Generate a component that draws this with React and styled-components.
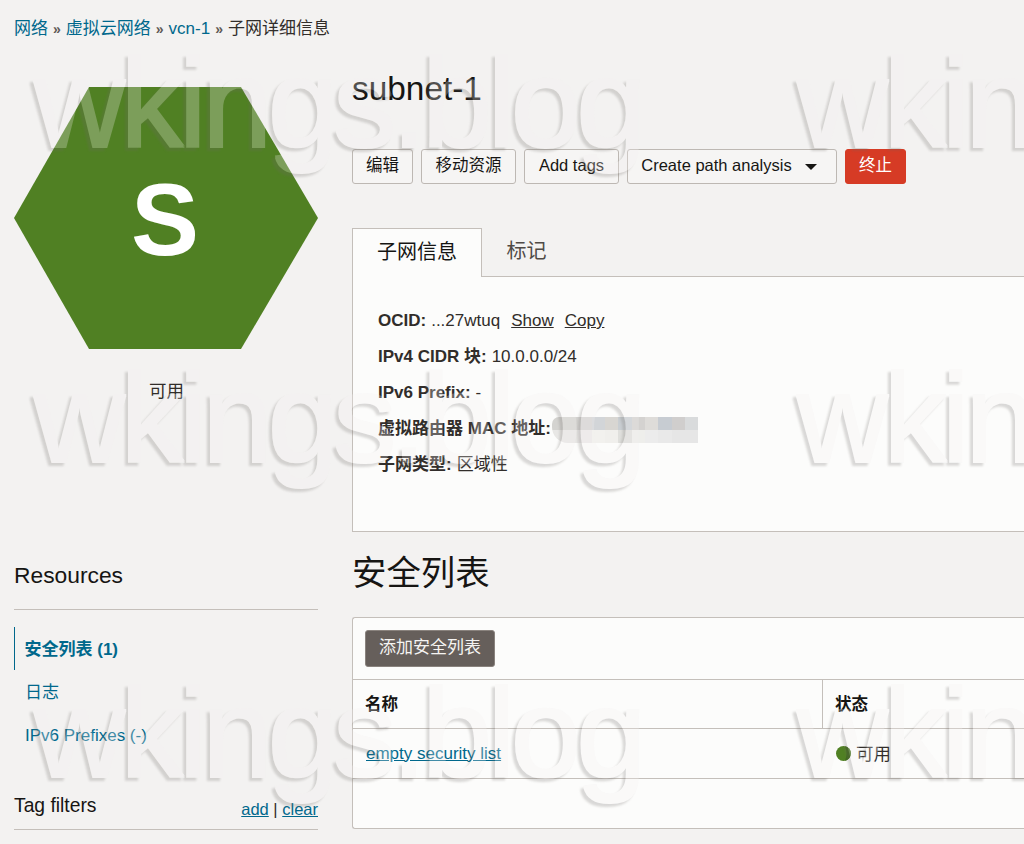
import React from "react";
import styled, { createGlobalStyle } from "styled-components";

const SANS = `"Liberation Sans", "Noto Sans CJK SC", sans-serif`;
const INK = "#161513";
const BODY = "#312d2a";
const LINK = "#00688c";
const LINE = "#c4bfba";

const Global = createGlobalStyle`
  html, body { margin: 0; padding: 0; background: #f3f2f1; }
  * { box-sizing: border-box; }
`;

const Viewport = styled.div`
  position: relative;
  width: 1024px;
  height: 844px;
  overflow: hidden;
  background: #f3f2f1;
  font-family: ${SANS};
  font-size: 17px;
  line-height: 20px;
  color: ${BODY};
`;

const Crumbs = styled.nav`
  display: flex;
  align-items: center;
  gap: 5px;
  height: 58px;
  padding-left: 14px;
`;
const CrumbLink = styled.a`
  color: ${LINK};
`;
const CrumbSep = styled.span`
  font-size: 14px;
  color: #5f5a56;
  font-weight: bold;
`;

const Columns = styled.div`
  display: grid;
  grid-template-columns: 304px 700px;
  column-gap: 34px;
  padding: 12px 0 0 14px;
`;

const Side = styled.aside`
  display: flex;
  flex-direction: column;
`;
const Hex = styled.svg`
  display: block;
  width: 304px;
  height: 262px;
  margin-top: 17px;
`;
const HexLetter = styled.text`
  font-family: ${SANS};
  font-weight: bold;
  font-size: 102px;
  fill: #fff;
  text-anchor: middle;
`;
const SideStatus = styled.div`
  margin-top: 30px;
  font-size: 17.5px;
  line-height: 24px;
  text-align: center;
  padding-left: 1px;
`;
const SideHead = styled.h3`
  margin: 157px 0 0;
  padding-bottom: 19px;
  border-bottom: 1px solid ${LINE};
  font-size: 22.8px;
  font-weight: normal;
  line-height: 30px;
  color: ${INK};
`;
const Menu = styled.ul`
  list-style: none;
  margin: 17px 0 0;
  padding: 0;
`;
const MenuItem = styled.li`
  display: flex;
  align-items: center;
  height: 43.3px;
  padding: 2px 0 0 ${(p) => (p.$active ? "9.5px" : "11px")};
  color: ${LINK};
  font-weight: ${(p) => (p.$active ? "bold" : "normal")};
  border-left: ${(p) => (p.$active ? "1.5px solid " + LINK : "none")};
`;
const TagHead = styled.div`
  display: flex;
  justify-content: space-between;
  align-items: flex-end;
  margin-top: 36px;
  padding-bottom: 10px;
  border-bottom: 1px solid ${LINE};
`;
const TagTitle = styled.span`
  font-size: 19.3px;
  line-height: 26px;
  color: ${INK};
`;
const TagLinks = styled.span`
  font-size: 16.5px;
  line-height: 20px;
  color: ${BODY};
`;
const Under = styled.a`
  color: ${(p) => p.$color || LINK};
  text-decoration: underline;
`;

const Main = styled.main`
  display: flex;
  flex-direction: column;
`;
const Title = styled.h1`
  margin: 0;
  font-size: 33.4px;
  font-weight: normal;
  line-height: 38px;
  color: ${INK};
`;
const Toolbar = styled.div`
  display: flex;
  gap: 8px;
  margin-top: 41px;
`;
const Button = styled.button`
  display: inline-flex;
  align-items: center;
  justify-content: center;
  gap: 13px;
  height: 35px;
  width: ${(p) => p.$w}px;
  padding: 0 ${(p) => p.$pr || 0}px 3px 0;
  font: inherit;
  font-size: 16.5px;
  color: ${INK};
  background: #f6f5f4;
  border: 1px solid #bdb8b3;
  border-radius: 3px;
`;
const DangerButton = styled(Button)`
  color: #fff;
  background: #d63b25;
  border-color: #d63b25;
`;
const Caret = styled.span`
  width: 0;
  height: 0;
  margin-top: 3px;
  border-left: 6px solid transparent;
  border-right: 6px solid transparent;
  border-top: 6px solid ${INK};
`;
const Tabs = styled.div`
  display: flex;
  height: 49px;
  margin-top: 44px;
  border-bottom: 1px solid ${LINE};
`;
const Tab = styled.div`
  display: flex;
  align-items: center;
  justify-content: center;
  width: ${(p) => (p.$active ? "130px" : "89px")};
  height: ${(p) => (p.$active ? "49px" : "48px")};
  padding-bottom: 2px;
  font-size: 20px;
  color: ${(p) => (p.$active ? INK : "#4f4a46")};
  background: ${(p) => (p.$active ? "#fcfcfb" : "transparent")};
  border: ${(p) => (p.$active ? "1px solid " + LINE : "none")};
  border-bottom: none;
`;
const InfoPanel = styled.section`
  height: 255px;
  padding: 26px 0 0 25px;
  background: #fcfcfb;
  border: 1px solid ${LINE};
  border-top: none;
  border-right: none;
`;
const InfoRow = styled.div`
  display: flex;
  align-items: center;
  height: 36px;
  white-space: pre;
`;
const Label = styled.b`
  color: ${BODY};
  margin-right: 5px;
`;
const Action = styled(Under)`
  margin-left: 11px;
`;
const Mosaic = styled.div`
  display: grid;
  grid-template-columns: repeat(11, 13.3px);
  grid-auto-rows: 13px;
  margin-left: -4px;
  transform: translateY(1px);
  border-radius: 7px 0 0 16px;
  overflow: hidden;
`;
const MosaicCell = styled.i`
  display: block;
`;
const SectionTitle = styled.h2`
  margin: 20px 0 0;
  font-size: 34.4px;
  font-weight: normal;
  line-height: 42px;
  color: ${INK};
`;
const Card = styled.section`
  height: 212px;
  margin-top: 23px;
  background: #fcfcfb;
  border: 1px solid ${LINE};
  border-right: none;
  border-radius: 3px 0 0 3px;
`;
const CardBar = styled.div`
  padding: 12px 12px;
  border-bottom: 1px solid ${LINE};
`;
const AddButton = styled(Button)`
  color: #f5f4f2;
  background: #665f5b;
  border-color: #8a837e;
  font-size: 17px;
  height: 37px;
  padding-bottom: 1px;
`;
const TableRow = styled.div`
  display: grid;
  grid-template-columns: 469px 1fr;
  height: ${(p) => p.$h}px;
  border-bottom: 1px solid ${LINE};
`;
const HeadCell = styled.div`
  display: flex;
  align-items: center;
  padding: 0 0 1px 12px;
  font-size: 16.5px;
  font-weight: bold;
  color: ${INK};
  & + & {
    border-left: 1px solid ${LINE};
  }
`;
const Cell = styled.div`
  display: flex;
  align-items: center;
  gap: 5px;
  padding-left: 13px;
  & + & {
    padding-left: 14px;
    font-size: 17.5px;
  }
`;
const Dot = styled.svg`
  display: block;
  width: 15px;
  height: 15px;
`;

const Watermark = styled.div`
  position: absolute;
  inset: 0;
  display: grid;
  grid-template-columns: repeat(2, 763px);
  grid-auto-rows: 315px;
  padding: 41px 0 0 34px;
  pointer-events: none;
  filter: url(#wm);
`;
const WatermarkText = styled.span`
  font-family: "Liberation Sans", sans-serif;
  font-size: 126px;
  line-height: 126px;
  letter-spacing: -4.6px;
  color: #000;
  white-space: nowrap;
`;
const FilterDefs = styled.svg`
  position: absolute;
  width: 0;
  height: 0;
`;

const TOP = ["#d4d3d0", "#d4d3d0", "#d5d4d2", "#d2d5d8", "#d8d6d2", "#c9ced2", "#d4d2d0", "#dedcd9", "#c7ccd2", "#d0cecd", "#d9dbdc"];
const BOTTOM = ["#e8e7e5", "#e8e7e5", "#eceaea", "#f2f1ee", "#f0efec", "#dfdfdc", "#eeeeeb", "#ececec", "#e9e9e9", "#e6e6e6", "#e6e6e6"];

export default function App() {
  return (
    <Viewport>
      <Global />
      <Crumbs>
        <CrumbLink>网络</CrumbLink>
        <CrumbSep>»</CrumbSep>
        <CrumbLink>虚拟云网络</CrumbLink>
        <CrumbSep>»</CrumbSep>
        <CrumbLink>vcn-1</CrumbLink>
        <CrumbSep>»</CrumbSep>
        <span>子网详细信息</span>
      </Crumbs>
      <Columns>
        <Side>
          <Hex viewBox="0 0 304 262">
            <polygon points="75,0 227,0 304,131 227,262 75,262 0,131" fill="#508023" />
            <HexLetter x="151" y="168">S</HexLetter>
          </Hex>
          <SideStatus>可用</SideStatus>
          <SideHead>Resources</SideHead>
          <Menu>
            <MenuItem $active>安全列表 (1)</MenuItem>
            <MenuItem>日志</MenuItem>
            <MenuItem>IPv6 Prefixes (-)</MenuItem>
          </Menu>
          <TagHead>
            <TagTitle>Tag filters</TagTitle>
            <TagLinks>
              <Under>add</Under> | <Under>clear</Under>
            </TagLinks>
          </TagHead>
        </Side>
        <Main>
          <Title>subnet-1</Title>
          <Toolbar>
            <Button $w={61}>编辑</Button>
            <Button $w={95}>移动资源</Button>
            <Button $w={95}>Add tags</Button>
            <Button $w={210} $pr={6}>
              Create path analysis
              <Caret />
            </Button>
            <DangerButton $w={61}>终止</DangerButton>
          </Toolbar>
          <Tabs>
            <Tab $active>子网信息</Tab>
            <Tab>标记</Tab>
          </Tabs>
          <InfoPanel>
            <InfoRow>
              <Label>OCID:</Label>...27wtuq<Action $color={BODY}>Show</Action>
              <Action $color={BODY}>Copy</Action>
            </InfoRow>
            <InfoRow>
              <Label>IPv4 CIDR 块:</Label>10.0.0.0/24
            </InfoRow>
            <InfoRow>
              <Label>IPv6 Prefix:</Label>-
            </InfoRow>
            <InfoRow>
              <Label>虚拟路由器 MAC 地址:</Label>
              <Mosaic>
                {[...TOP, ...BOTTOM].map((c, i) => (
                  <MosaicCell key={i} style={{ background: c }} />
                ))}
              </Mosaic>
            </InfoRow>
            <InfoRow>
              <Label>子网类型:</Label>区域性
            </InfoRow>
          </InfoPanel>
          <SectionTitle>安全列表</SectionTitle>
          <Card>
            <CardBar>
              <AddButton $w={130}>添加安全列表</AddButton>
            </CardBar>
            <TableRow $h={49}>
              <HeadCell>名称</HeadCell>
              <HeadCell>状态</HeadCell>
            </TableRow>
            <TableRow $h={50}>
              <Cell>
                <Under>empty security list</Under>
              </Cell>
              <Cell>
                <Dot viewBox="0 0 15 15">
                  <circle cx="7.5" cy="7.5" r="7.5" fill="#508023" />
                  <path d="M9 .2 A7.5 7.5 0 0 1 9 14.8 Q12 7.5 9 .2Z" fill="#3f6a1b" />
                </Dot>
                可用
              </Cell>
            </TableRow>
          </Card>
        </Main>
      </Columns>
      <FilterDefs aria-hidden="true">
        <filter id="wm" x="0" y="0" width="100%" height="100%" colorInterpolationFilters="sRGB">
          <feMorphology in="SourceAlpha" operator="dilate" radius="1.3" result="solid" />
          <feOffset in="solid" dx="-3" dy="3" result="moved" />
          <feGaussianBlur in="moved" stdDeviation="1.2" result="soft" />
          <feComposite in="soft" in2="solid" operator="out" result="edge" />
          <feFlood floodColor="#6b6865" floodOpacity="0.24" result="tint" />
          <feComposite in="tint" in2="edge" operator="in" result="shade" />
          <feFlood floodColor="#f3f2f1" floodOpacity="0.27" result="wash" />
          <feComposite in="wash" in2="solid" operator="in" result="fill" />
          <feMerge>
            <feMergeNode in="shade" />
            <feMergeNode in="fill" />
          </feMerge>
        </filter>
      </FilterDefs>
      <Watermark>
        {Array.from({ length: 6 }, (_, i) => (
          <WatermarkText key={i}>wkings.blog</WatermarkText>
        ))}
      </Watermark>
    </Viewport>
  );
}
